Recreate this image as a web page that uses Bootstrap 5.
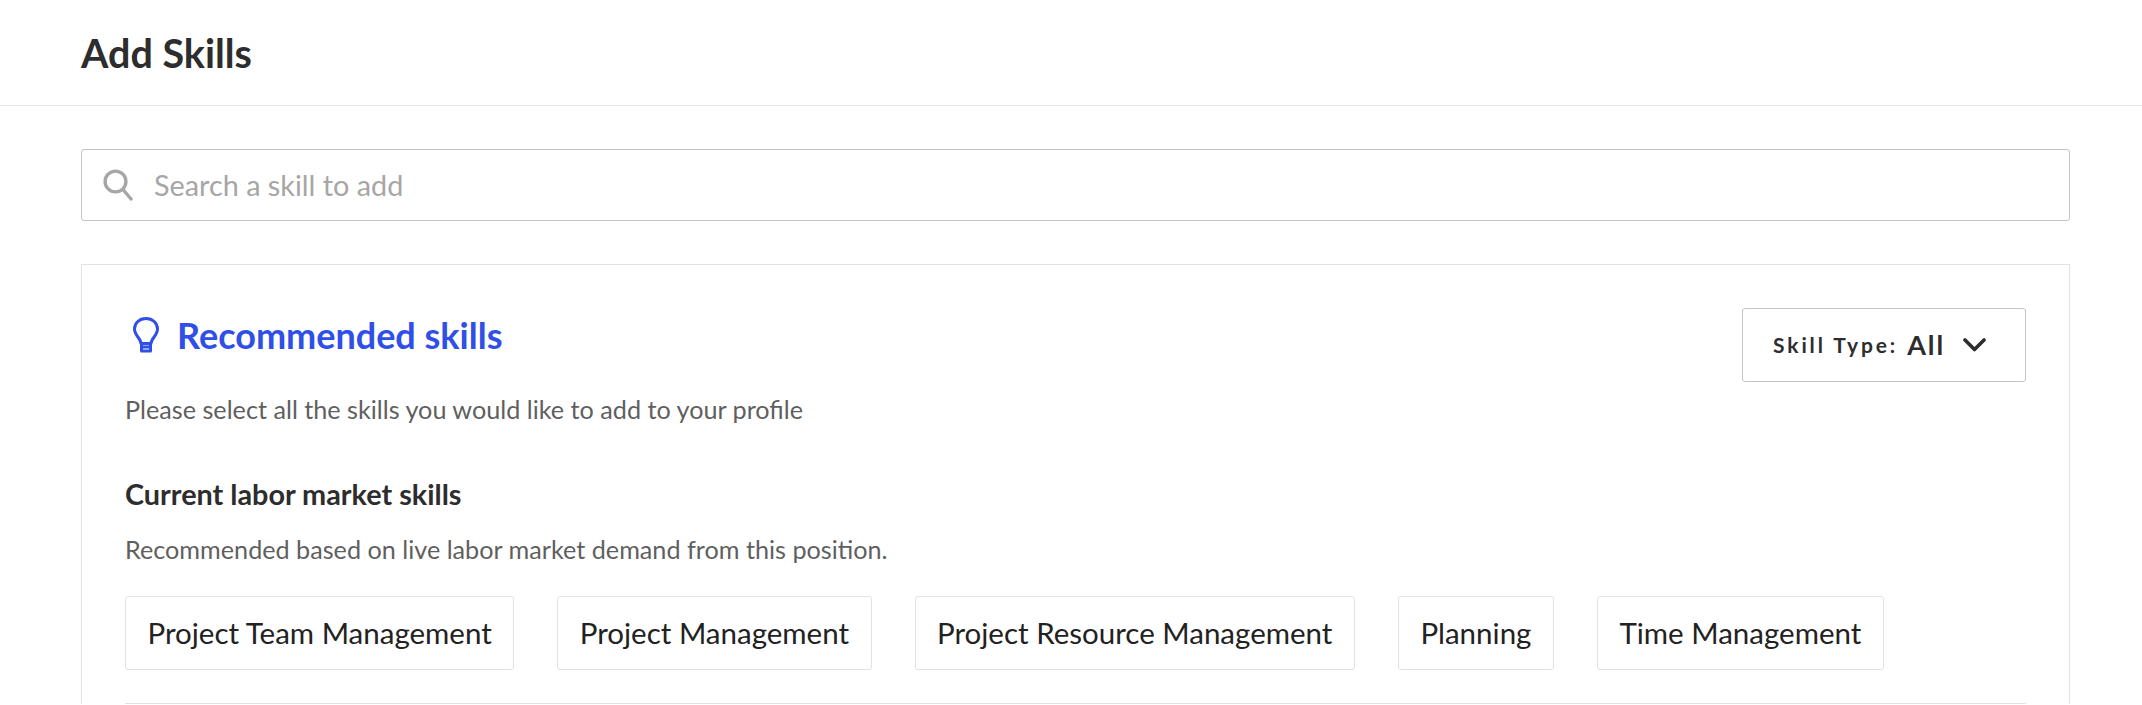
<!DOCTYPE html>
<html lang="en">
<head>
<meta charset="utf-8">
<title>Add Skills</title>
<link rel="stylesheet" href="https://cdn.jsdelivr.net/npm/bootstrap@5.3.0/dist/css/bootstrap.min.css">
<style>
html, body { height: 705px; overflow: hidden; }
body { font-family: Lato, "Liberation Sans", sans-serif; background: #fff; color: #2d2d2d; }
.page-head { height: 106px; padding: 0 81px; border-bottom: 1px solid #e4e4e4; }
.page-title { font-size: 39.500px; font-weight: 700; line-height: 1; margin: 0; color: #2d2d2d; }
.page-main { padding: 43px 72px 0 81px; }
.search-box { height: 72px; padding: 0 22px 0 21px; border: 1px solid #c4c4c4; border-radius: 3px; gap: 21px; }
.search-box input { border: 0; outline: 0; padding: 2px 0 0; flex: 1; font-size: 28.800px; color: #2d2d2d; font-family: inherit; background: transparent; }
.search-box input::placeholder { color: #a6a6a6; opacity: 1; }
.rec-panel { margin-top: 43px; border: 1px solid #e1e1e8; border-bottom: 0; border-radius: 0; padding: 43px 43px 0 43px; }
.rec-title { font-size: 36px; font-weight: 700; line-height: 44px; color: #2f4fe8; margin: 0; }
.rec-head { gap: 18px; padding-left: 8px; padding-top: 5px; }
.type-btn { height: 74px; width: 284px; border: 1px solid #c4c4c4; border-radius: 3px; background: #fff; padding: 0 9px 0 0; gap: 18px; color: #2d2d2d; font-weight: 700; }
.type-label { font-size: 21px; letter-spacing: 2.900px; }
.type-val { font-size: 27px; letter-spacing: 1.900px; margin-left: -9px; font-weight: 700; }
.muted-line { font-size: 25.200px; color: #5f5f5f; line-height: 30px; margin: 0; }
.sub-title { font-size: 28.800px; font-weight: 700; line-height: 32px; color: #2d2d2d; margin: 0; }
.skill-row { gap: 43px; margin-top: 32px; }
.skill-chip { height: 74px; padding: 0 21.500px; border: 1px solid #e1e1e8; border-radius: 3px; background: #fff; font-size: 29.500px; color: #222; }
.panel-rule { margin: 33px 0 0; border: 0; border-top: 1px solid #e1e1e8; opacity: 1; }
.gap-intro { margin-top: 37px; }
.gap-sub { margin-top: 54px; }
.gap-note { margin-top: 24px; }
</style>
</head>
<body>
<header class="page-head d-flex align-items-center">
  <h1 class="page-title">Add Skills</h1>
</header>
<main class="page-main">
  <div class="search-box d-flex align-items-center">
    <svg width="30" height="32" viewBox="0 0 30 32" fill="none" stroke="#a6a6a6" stroke-width="3.4" stroke-linecap="round"><circle cx="12.5" cy="12.5" r="10.4"/><path d="M20 20.5 28 30"/></svg>
    <input type="text" placeholder="Search a skill to add" aria-label="Search a skill to add">
  </div>
  <section class="rec-panel">
    <div class="d-flex justify-content-between align-items-start">
      <div>
        <div class="rec-head d-flex align-items-center">
          <svg width="26" height="36" viewBox="0 0 26 36" fill="none" stroke="#2f4fe8" stroke-width="3" stroke-linejoin="round" stroke-linecap="round"><path d="M8 26.500c0-5-6.500-8-6.500-14.500C1.500 6 6.500 1.500 13 1.500S24.500 6 24.500 12C24.500 18.500 18 21.500 18 26.500Z"/><path d="M8.500 26.500v7.500h9v-7.500"/><path d="M8.500 30h9"/></svg>
          <h2 class="rec-title">Recommended skills</h2>
        </div>
        <p class="muted-line gap-intro">Please select all the skills you would like to add to your profile</p>
      </div>
      <button type="button" class="type-btn btn d-flex align-items-center justify-content-center">
        <span class="type-label">Skill Type:</span>
        <span class="type-val">All</span>
        <svg width="23" height="14" viewBox="0 0 23 14" fill="none" stroke="#2d2d2d" stroke-width="3.600" stroke-linecap="round" stroke-linejoin="round"><path d="M2 2l9.500 9.500L21 2"/></svg>
      </button>
    </div>
    <h3 class="sub-title gap-sub">Current labor market skills</h3>
    <p class="muted-line gap-note">Recommended based on live labor market demand from this position.</p>
    <div class="skill-row d-flex">
      <div class="skill-chip d-flex align-items-center">Project Team Management</div>
      <div class="skill-chip d-flex align-items-center">Project Management</div>
      <div class="skill-chip d-flex align-items-center">Project Resource Management</div>
      <div class="skill-chip d-flex align-items-center">Planning</div>
      <div class="skill-chip d-flex align-items-center">Time Management</div>
    </div>
    <hr class="panel-rule">
  </section>
</main>
<script src="https://cdn.jsdelivr.net/npm/bootstrap@5.3.0/dist/js/bootstrap.bundle.min.js"></script>
</body>
</html>
